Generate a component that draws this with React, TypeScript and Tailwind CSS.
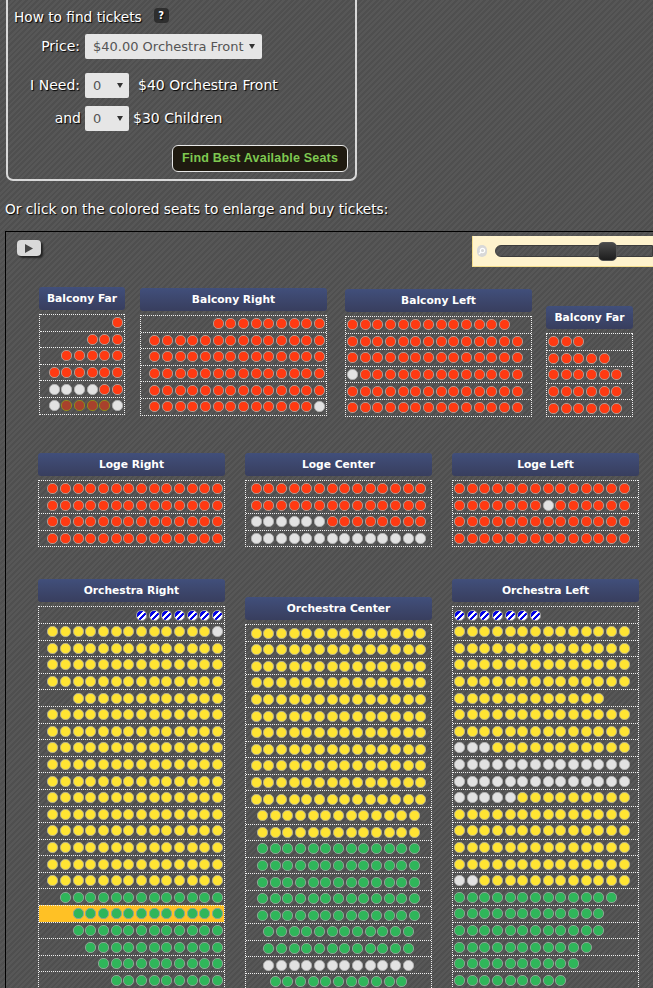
import React from 'react';

const stripes = 'bg-[repeating-linear-gradient(135deg,#575757_0,#575757_2px,#4f4f4f_2px,#4f4f4f_4px)]';
const labelShadow = '[text-shadow:1px_1px_1px_#000]';

const seatStyles: Record<string, string> = {
  r: 'bg-[#ff3a12] border-[#b09a92]',
  y: 'bg-[#ffe433] border-[#b8b28a]',
  g: 'bg-[#2fb65a] border-[#8ca595]',
  w: 'bg-[#e2e2e2] border-[#b0b0b0]',
  s: 'bg-[#a8412c] border-[#8c8a20]',
  b: 'bg-[repeating-linear-gradient(135deg,#ffffff_0,#ffffff_2px,#0000e6_2px,#0000e6_4.4px)] border-[#a0a0a0]',
};

function n(code: string, count: number) {
  return code.repeat(count);
}

function Seat({ code }: { code: string }) {
  return (
    <div className="w-[12.7px] flex justify-center shrink-0">
      <div className={`w-[11px] h-[11px] rounded-[5px] border ${seatStyles[code]}`} />
    </div>
  );
}

interface SectionProps {
  title: string;
  rows: string[];
  align: 'start' | 'center' | 'end';
  className: string;
  highlight?: number;
}

function Section({ title, rows, align, className, highlight }: SectionProps) {
  const justify =
    align === 'start' ? 'justify-start' : align === 'center' ? 'justify-center' : 'justify-end';
  return (
    <div className={`shrink-0 ${className}`}>
      <div className="h-[23px] pt-[1px] mb-[4px] rounded-[3px] bg-gradient-to-b from-[#414f7b] to-[#383e5e] flex items-center justify-center text-white font-bold text-[10.7px] [font-family:'DejaVu_Sans',sans-serif]">
        {title}
      </div>
      <div className="border-x border-b border-dotted border-[#f0f0f0]">
        {rows.map((row, i) => (
          <div
            key={i}
            className={`h-[16.6px] border-t border-dotted border-[#f0f0f0] flex items-center ${justify} ${
              i === highlight ? 'bg-[#ffc125]' : ''
            }`}
          >
            {row.split('').map((code, j) => (
              <Seat key={j} code={code} />
            ))}
          </div>
        ))}
      </div>
    </div>
  );
}

const orchestraRight = [
  n('b', 7), n('y', 13) + 'w', n('y', 14), n('y', 14), n('y', 14), n('y', 12),
  n('y', 14), n('y', 14), n('y', 14), n('y', 14), n('y', 14), n('y', 14),
  n('y', 14), n('y', 14), n('y', 14), n('y', 14), n('y', 14),
  n('g', 13), n('g', 12), n('g', 12), n('g', 11), n('g', 10), n('g', 9),
];

const orchestraCenter = [
  n('y', 14), n('y', 14), n('y', 14), n('y', 14), n('y', 14), n('y', 14),
  n('y', 14), n('y', 14), n('y', 14), n('y', 14), n('y', 14),
  n('y', 13), n('y', 13),
  n('g', 13), n('g', 13), n('g', 13), n('g', 13), n('g', 13),
  n('g', 12), n('g', 12), n('w', 12), n('g', 11),
];

const orchestraLeft = [
  n('b', 7), n('y', 14), n('y', 14), n('y', 14), n('y', 14), n('y', 12),
  n('y', 14), n('y', 14), n('w', 3) + n('y', 11), n('w', 14), n('w', 14),
  n('w', 5) + n('y', 9), n('y', 14), n('y', 14), n('y', 14), n('y', 14),
  n('w', 2) + n('y', 12),
  n('g', 13), n('g', 12), n('g', 12), n('g', 11), n('g', 10), n('g', 9),
];

export default function App() {
  return (
    <div className={`h-[988px] overflow-hidden text-white text-[14px] [font-family:'DejaVu_Sans',Verdana,sans-serif] ${stripes}`}>
      {/* Finder box */}
      <div className="ml-[6px] w-[351px] h-[181px] border-x-2 border-b-2 border-[#d8d8d8] rounded-b-[7px] relative">
        <div className={`pt-[8px] pl-[6px] h-[34px] flex items-start ${labelShadow}`}>
          <span className="leading-[18px] text-[13.7px]">How to find tickets</span>
          <span className="ml-[12px] w-[15px] h-[15px] rounded-[4px] bg-[#2e2e2e] text-[10px] font-bold flex items-center justify-center">?</span>
        </div>
        <div className="flex items-center h-[25px]">
          <span className={`w-[72px] text-right ${labelShadow}`}>Price:</span>
          <div className="ml-[5px] w-[177px] h-[25px] bg-[#e6e6e6] rounded-[2px] text-[#555] text-[13px] pl-[8px] flex items-center">
            $40.00 Orchestra Front
            <span className="ml-[5px] border-x-[3px] border-x-transparent border-t-[5px] border-t-[#333]" />
          </div>
        </div>
        <div className="flex items-center h-[25px] mt-[14px]">
          <span className={`w-[72px] text-right ${labelShadow}`}>I Need:</span>
          <div className="ml-[5px] w-[44px] h-[25px] bg-[#e6e6e6] rounded-[2px] text-[#555] text-[13px] pl-[8px] flex items-center justify-between pr-[6px]">
            0
            <span className="border-x-[3px] border-x-transparent border-t-[5px] border-t-[#333]" />
          </div>
          <span className={`ml-[9px] ${labelShadow}`}>$40 Orchestra Front</span>
        </div>
        <div className="flex items-center h-[25px] mt-[8px]">
          <span className={`w-[73px] text-right ${labelShadow}`}>and</span>
          <div className="ml-[4px] w-[44px] h-[25px] bg-[#e6e6e6] rounded-[2px] text-[#555] text-[13px] pl-[8px] flex items-center justify-between pr-[6px]">
            0
            <span className="border-x-[3px] border-x-transparent border-t-[5px] border-t-[#333]" />
          </div>
          <span className={`ml-[4px] ${labelShadow}`}>$30 Children</span>
        </div>
        <div className="flex justify-end pr-[7px] mt-[14px]">
          <button className="w-[176px] h-[27px] bg-[#1f1a10] border border-[#e8e8e8] rounded-[6px] text-[#7ec850] font-bold text-[12.5px] [font-family:'Liberation_Sans',sans-serif] tracking-[0.2px]">
            Find Best Available Seats
          </button>
        </div>
      </div>

      <p className={`ml-[5px] mt-[19px] h-[19px] leading-[19px] text-[13.7px] ${labelShadow}`}>
        Or click on the colored seats to enlarge and buy tickets:
      </p>

      {/* Seat map */}
      <div className="ml-[5px] mt-[12px] border-t border-l border-black overflow-hidden h-[800px]">
        <div className="flex justify-between pt-[4px] h-[35px]">
          <button className="ml-[11px] mt-[4px] w-[24px] h-[16px] rounded-[4px] bg-[#d9d9d9] shadow-[2px_2px_2px_#222] flex items-center justify-center">
            <svg width="10" height="11" viewBox="0 0 10 11">
              <path d="M1 1 L9 5.5 L1 10 Z" fill="#444" />
            </svg>
          </button>
          <div className="w-[181px] h-[31px] bg-[#fff3cd] border-l border-b border-[#f4dd8c] relative flex items-center">
            <div className="ml-[4px] w-[12px] h-[12px] rounded-full bg-[#d8d8d8] flex items-center justify-center">
              <svg width="8" height="8" viewBox="0 0 8 8" fill="none" stroke="#fff" strokeWidth="1.2">
                <circle cx="4.5" cy="3.5" r="2.2" />
                <path d="M3 5 L1 7" />
              </svg>
            </div>
            <div className={`ml-[8px] w-[180px] h-[12px] rounded-l-full border border-[#3c3c3c] ${stripes}`} />
            <div className="absolute left-[125px] top-[6px] w-[19px] h-[19px] rounded-[5px] bg-gradient-to-b from-[#4a4a4a] to-[#1e1e1e] border border-[#555]" />
          </div>
        </div>

        <div className="flex items-start pl-[33px] mt-[20px] h-[129px]">
          <Section
            title="Balcony Far"
            className="w-[86px]"
            align="end"
            rows={[n('r', 1), n('r', 3), n('r', 5), n('r', 6), n('w', 4) + n('r', 2), 'wssssw']}
          />
          <Section
            title="Balcony Right"
            className="w-[187px] ml-[15px] mt-[1px]"
            align="end"
            rows={[n('r', 9), n('r', 14), n('r', 14), n('r', 14), n('r', 14), n('r', 13) + 'w']}
          />
          <Section
            title="Balcony Left"
            className="w-[187px] ml-[18px] mt-[2px]"
            align="start"
            rows={[n('r', 13), n('r', 14), n('r', 14), 'w' + n('r', 13), n('r', 14), n('r', 14)]}
          />
          <Section
            title="Balcony Far"
            className="w-[87px] ml-[14px] mt-[19px]"
            align="start"
            rows={[n('r', 3), n('r', 5), n('r', 6), n('r', 6), n('r', 6)]}
          />
        </div>

        <div className="flex items-start pl-[32px] gap-[20px] mt-[37px]">
          <Section
            title="Loge Right"
            className="w-[187px]"
            align="end"
            rows={[n('r', 14), n('r', 14), n('r', 14), n('r', 14)]}
          />
          <Section
            title="Loge Center"
            className="w-[187px]"
            align="center"
            rows={[n('r', 14), n('r', 14), n('w', 6) + n('r', 8), n('w', 14)]}
          />
          <Section
            title="Loge Left"
            className="w-[187px]"
            align="start"
            rows={[n('r', 14), n('r', 7) + 'w' + n('r', 6), n('r', 14), n('r', 14)]}
          />
        </div>

        <div className="flex items-start pl-[32px] gap-[20px] mt-[32px]">
          <Section title="Orchestra Right" className="w-[187px]" align="end" rows={orchestraRight} highlight={18} />
          <Section title="Orchestra Center" className="w-[187px] mt-[18px]" align="center" rows={orchestraCenter} />
          <Section title="Orchestra Left" className="w-[187px]" align="start" rows={orchestraLeft} />
        </div>
      </div>
    </div>
  );
}
